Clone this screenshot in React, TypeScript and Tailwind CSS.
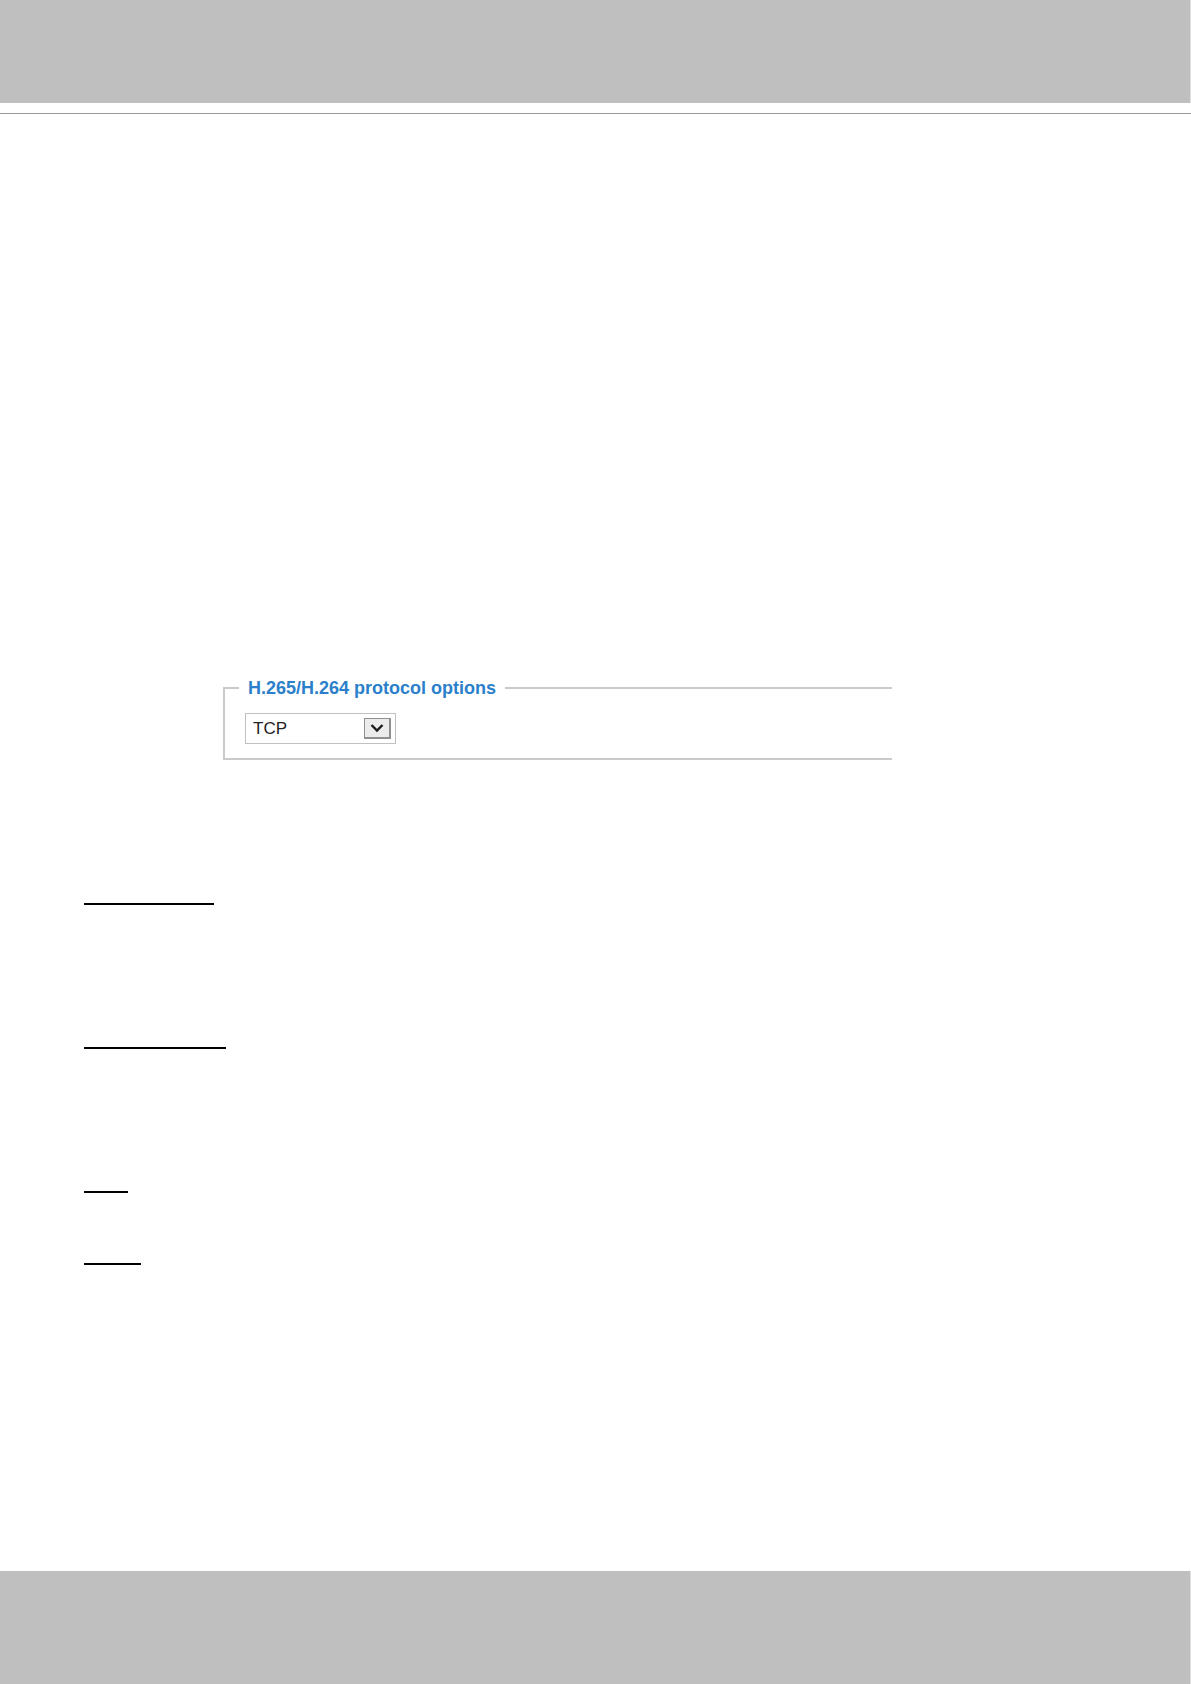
import React from "react";

const Rule = ({ className }: { className: string }) => (
  <hr className={`h-[2px] border-0 bg-black ${className}`} />
);

function ProtocolOptions() {
  return (
    <fieldset className="min-w-0 border-2 border-r-0 border-[#cacaca] pt-[15px] pb-[14px] pl-5">
      <legend className="-ml-[6px] px-[9px] text-lg leading-5 font-bold text-[#2b7fcb]">
        H.265/H.264 protocol options
      </legend>
      <div className="relative h-[31px] w-[151px]">
        <select
          aria-label="H.265/H.264 protocol options"
          defaultValue="TCP"
          className="block h-full w-full appearance-none rounded-none border border-[#bfc2c5] bg-white pl-[7px] text-[17px] text-[#222222]"
        >
          <option>TCP</option>
        </select>
        <span className="pointer-events-none absolute top-[5px] right-[5px] flex h-[21px] w-[27px] items-center justify-center border border-r-2 border-b-2 border-[#8e9092] bg-[#ececec]">
          <svg width="14" height="10" viewBox="0 0 14 10" fill="none">
            <path d="M1.5 2L7 7.5L12.5 2" stroke="#1c1c1c" strokeWidth="2.4" />
          </svg>
        </span>
      </div>
    </fieldset>
  );
}

function App() {
  return (
    <div className="flex min-h-screen flex-col bg-white font-['Liberation_Sans',Arial,sans-serif]">
      <header className="border-b border-[#9a9a9a] pb-[10px]">
        <div className="h-[103px] border-r border-[#dedede] bg-[#bfbfbf]" />
      </header>
      <main className="grow pt-[564px] pb-10">
        <div className="mr-[299px] ml-[223px]">
          <ProtocolOptions />
        </div>
        <div className="flex flex-col pt-[143px] pl-[84px]">
          <Rule className="w-[130px]" />
          <Rule className="mt-[142px] w-[142px]" />
          <Rule className="mt-[142px] w-[44px]" />
          <Rule className="mt-[70px] w-[57px]" />
        </div>
      </main>
      <footer className="h-[113px] border-r border-[#dedede] bg-[#bfbfbf]" />
    </div>
  );
}

export default App;
